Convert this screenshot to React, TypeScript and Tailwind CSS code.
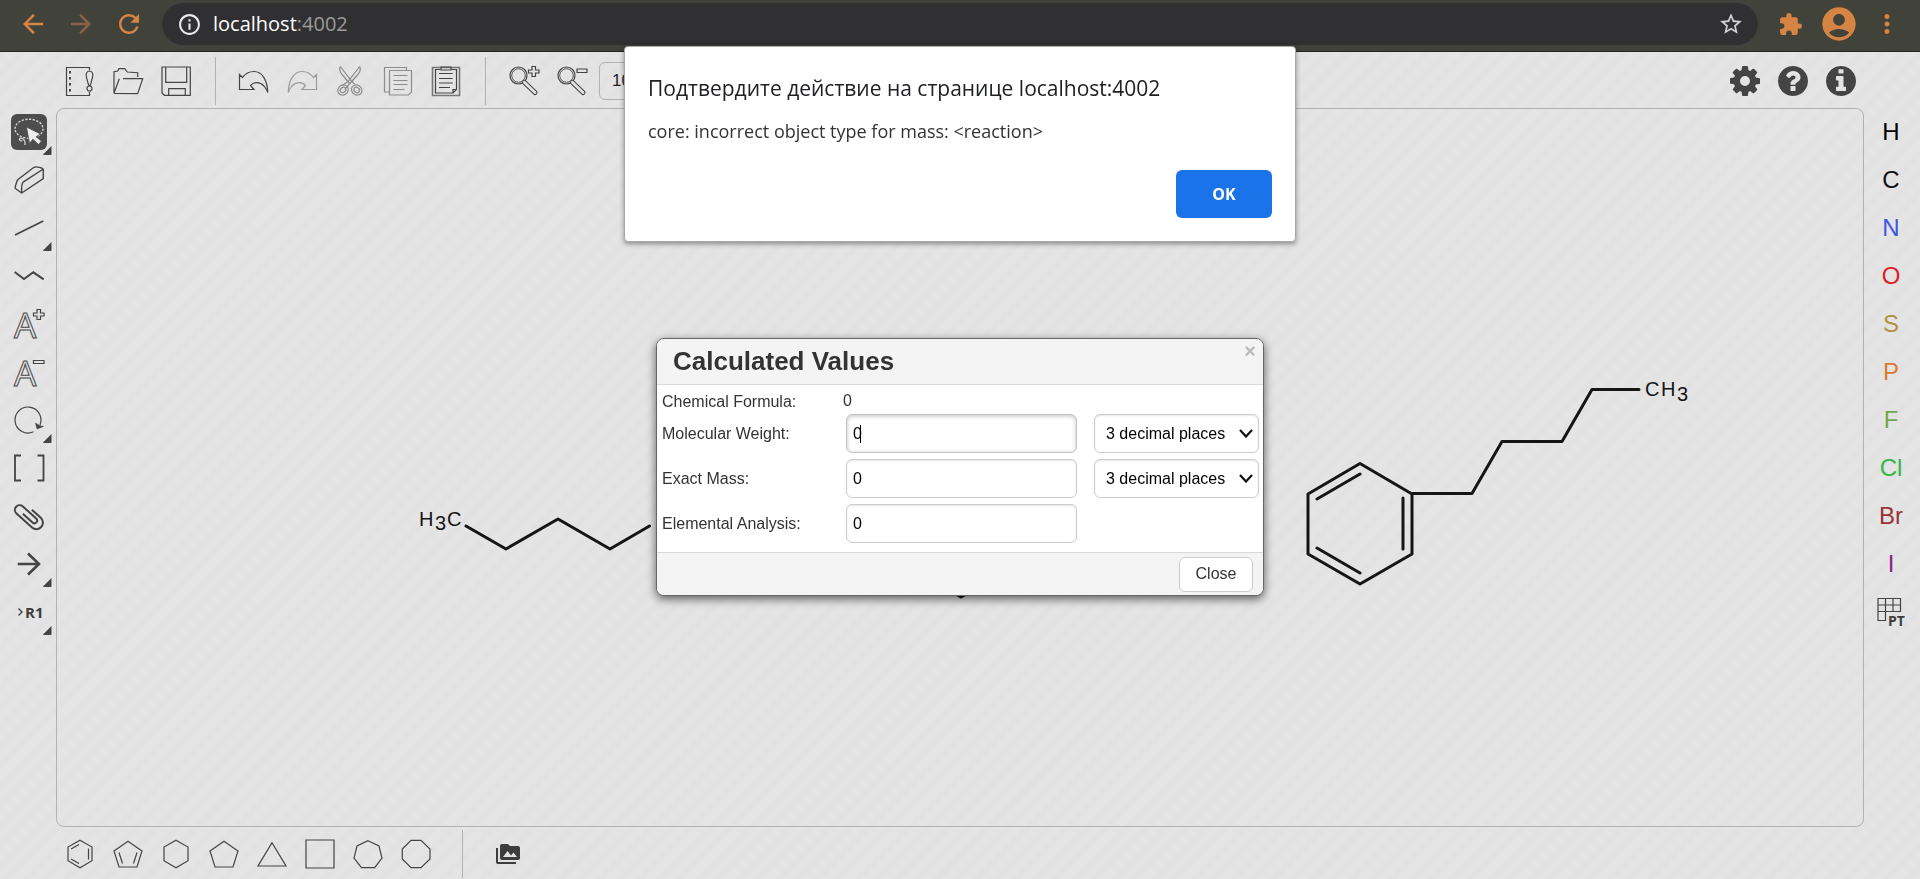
import type { ReactNode } from "react";
import {
  MdAccountCircle,
  MdArrowBack,
  MdArrowForward,
  MdExtension,
  MdInfoOutline,
  MdMoreVert,
  MdPermMedia,
  MdRefresh,
  MdStarBorder,
} from "react-icons/md";

const paper = "#e3e3e3";

function Glyph({ children, color = "#444", width = 1.2 }: { children: ReactNode; color?: string; width?: number }) {
  return (
    <svg viewBox="0 0 32 32" className="size-8 shrink-0 overflow-visible" fill="none" stroke={color} strokeWidth={width} aria-hidden="true">
      {children}
    </svg>
  );
}

function Tool({ label, children, more = false, active = false }: { label: string; children: ReactNode; more?: boolean; active?: boolean }) {
  return (
    <button type="button" aria-label={label} className="relative flex size-12 shrink-0 items-center justify-center">
      <span className={active ? "flex size-9 items-center justify-center rounded-md bg-[#4d4d4d]" : "flex size-9 items-center justify-center"}>
        {children}
      </span>
      {more && (
        <svg viewBox="0 0 9 9" className="absolute right-px bottom-px size-[9px]" fill="#444" aria-hidden="true">
          <path d="M0 8.5 8.5 0V8a1 1 0 0 1-1 1H.5Z" />
        </svg>
      )}
    </button>
  );
}

function Divider() {
  return <div className="mr-3.5 ml-[15px] h-12 w-px shrink-0 bg-[#b2b2b2]" />;
}

const disc =
  "m640 416q0 209-103 385.500t-279.500 279.500-385.500 103-385.500-103-279.500-279.500-103-385.500 103-385.500 279.500-279.500 385.500-103 385.500 103 279.500 279.500 103 385.500z";

const solidIcons = [
  {
    label: "Settings",
    d: "M1152 896q0-106-75-181t-181-75-181 75-75 181 75 181 181 75 181-75 75-181zm512-109v222q0 12-8 23t-20 13l-185 28q-19 54-39 91 35 50 107 138 10 12 10 25t-9 23q-27 37-99 108t-94 71q-12 0-26-9l-138-108q-44 23-91 38-16 136-29 186-7 28-36 28h-222q-14 0-24.500-8.500t-11.500-21.500l-28-184q-49-16-90-37l-141 107q-10 9-25 9-14 0-25-11-126-114-165-168-7-10-7-23 0-12 8-23 15-21 51-66.500t54-70.500q-27-50-41-99l-183-27q-13-2-21-12.500t-8-23.500v-222q0-12 8-23t19-13l186-28q14-46 39-92-40-57-107-138-10-12-10-24 0-10 9-23 26-36 98.500-107.500t94.500-71.500q13 0 26 10l138 107q44-23 91-38 16-136 29-186 7-28 36-28h222q14 0 24.500 8.500t11.500 21.500l28 184q49 16 90 37l142-107q9-9 24-9 13 0 25 10 129 119 165 170 7 8 7 22 0 12-8 23-15 21-51 66.500t-54 70.500q26 50 41 98l183 28q13 2 21 12.500t8 23.500z",
  },
  {
    label: "Help",
    d: "M1024 1376v-192q0-14-9-23t-23-9h-192q-14 0-23 9t-9 23v192q0 14 9 23t23 9h192q14 0 23-9t9-23zm256-672q0-88-55.500-163t-138.500-116-170-41q-243 0-371 213-15 24 8 42l132 100q7 6 19 6 16 0 25-12 53-68 86-92 34-24 86-24 48 0 85.500 26t37.500 59q0 38-20 61t-68 45q-63 28-115.500 86.500t-52.500 125.500v36q0 14 9 23t23 9h192q14 0 23-9t9-23q0-19 21.500-49.500t54.500-49.500q32-18 49-28.500t46-35 44.500-48 28-60.500 12.500-81zm384 192q0 209-103 385.500t-279.500 279.500-385.500 103-385.500-103-279.500-279.500-103-385.500 103-385.500 279.500-279.500 385.500-103 385.500 103 279.500 279.500 103 385.500z",
  },
  {
    label: "About",
    d: "M1152 1376v-160q0-14-9-23t-23-9h-96v-512q0-14-9-23t-23-9h-320q-14 0-23 9t-9 23v160q0 14 9 23t23 9h96v320h-96q-14 0-23 9t-9 23v160q0 14 9 23t23 9h448q14 0 23-9t9-23zm-128-896v-160q0-14-9-23t-23-9h-192q-14 0-23 9t-9 23v160q0 14 9 23t23 9h192q14 0 23-9t9-23z" + disc,
  },
];

const atoms = [
  { symbol: "H", color: "text-[#000000]" },
  { symbol: "C", color: "text-[#111111]" },
  { symbol: "N", color: "text-[#3d55e0]" },
  { symbol: "O", color: "text-[#dc2226]" },
  { symbol: "S", color: "text-[#b3923c]" },
  { symbol: "P", color: "text-[#db7a2e]" },
  { symbol: "F", color: "text-[#6fa94a]" },
  { symbol: "Cl", color: "text-[#35b646]" },
  { symbol: "Br", color: "text-[#993336]" },
  { symbol: "I", color: "text-[#8a1f8e]" },
];

const rings = [
  { label: "Cyclopentadiene", points: "16,3.3 30,13 25,29 7,29 2,13", extra: "M7 14.5 10.500 25.500M25 14.500 21.500 25.500" },
  { label: "Cyclohexane", points: "16,2.3 28,9 28,22.700 16,29.700 4,22.700 4,9", extra: "" },
  { label: "Cyclopentane", points: "16,3.3 30,13 25,29 7,29 2,13", extra: "" },
  { label: "Cyclopropane", points: "16,4.7 30,28 2,28", extra: "" },
  { label: "Cyclobutane", points: "2,2 30,2 30,30 2,30", extra: "" },
  { label: "Cycloheptane", points: "16,2.7 27,8 30,20 22.700,29.700 9.500,29.700 2,20 5,8", extra: "" },
  { label: "Cyclooctane", points: "11,2.3 21,2.3 30,11 30,21 21,29.700 11,29.700 2.300,21 2.300,11", extra: "" },
];

const cornerPlus = "M24 1.500h3.500v3.500h3.500v3h-3.500v3.500h-3.500v-3.500h-3.500v-3h3.500Z";

function Magnifier({ children }: { children: ReactNode }) {
  return (
    <Glyph>
      <circle cx="10.500" cy="10.500" r="8.500" />
      <circle cx="10.500" cy="10.500" r="6.800" strokeWidth="0.900" />
      <path d="M16.500 17.500 27 27.500" strokeWidth="5" strokeLinecap="round" />
      <path d="M16.300 17.300 27 27.500" stroke={paper} strokeWidth="2.800" strokeLinecap="round" />
      {children}
    </Glyph>
  );
}

function BrowserBar() {
  return (
    <header className="flex h-[52px] shrink-0 items-center border-b border-[#26261f] bg-[#41423a] pb-[3px] pl-[18px] text-[#d68444]">
      <button type="button" aria-label="Back" className="mr-[18px]"><MdArrowBack size={30} /></button>
      <button type="button" aria-label="Forward" className="mr-[18px] text-[#8a6245]"><MdArrowForward size={30} /></button>
      <button type="button" aria-label="Reload" className="mr-[18px]"><MdRefresh size={30} /></button>
      <div className="flex h-[42px] flex-1 items-center rounded-full bg-[#303032] pr-3.5 pl-[15px]">
        <MdInfoOutline size={25} className="text-[#e8e8e8]" />
        <div className="ml-[11px] flex-1 font-['Open_Sans','Noto_Sans',sans-serif] text-[20px] leading-6 text-white">
          localhost<span className="text-[#9b9b9b]">:4002</span>
        </div>
        <button type="button" aria-label="Bookmark" className="text-[#d0d0d0]"><MdStarBorder size={26} /></button>
      </div>
      <button type="button" aria-label="Extensions" className="ml-5"><MdExtension size={25} /></button>
      <button type="button" aria-label="Profile" className="ml-4"><MdAccountCircle size={40} /></button>
      <button type="button" aria-label="Menu" className="mr-[18px] ml-[13px]"><MdMoreVert size={30} /></button>
    </header>
  );
}

function TopTools() {
  const faded = "#9a9a9a";
  return (
    <div className="flex h-14 shrink-0 items-center pt-0.5 pr-[55px] pl-14">
      <Tool label="New">
        <Glyph>
          <path d="M25.500 5V2.500H2.500V30.500H25.500V27" />
          <path d="M6 6v2.500M6 12v2.500M6 18v2.500M6 24v2.500" strokeWidth="2" />
          <path d="M25.500 6C20.500 6.500 22 12 24.800 20.500H26.200C29 12 30.500 6.500 25.500 6Z" />
          <circle cx="25.500" cy="23.500" r="2.500" />
        </Glyph>
      </Tool>
      <Tool label="Open">
        <Glyph>
          <path d="M25.700 12V7.700L15.300 7 12.700 3.700H7L5.700 6 2 6.700V28.300L7.300 13.700M11 13.700H30.700L25.700 28.700 2 28.300" />
        </Glyph>
      </Tool>
      <Tool label="Save">
        <Glyph>
          <path d="M2 2H30.300V30.300H4.500L2 28Z" />
          <path d="M5.700 2V17.300H26.700V2M8.700 30V23.700H25.300V30" />
        </Glyph>
      </Tool>
      <Divider />
      <Tool label="Undo">
        <Glyph>
          <path d="M1.500 9.500V24.500H16L12.500 20.500C15.500 16.500 22 16.500 26 21C28 23.500 29 25 29.700 27.500C29.500 15 24 6.500 16 6.500C11 6.500 7 9 4.500 12.500Z" />
        </Glyph>
      </Tool>
      <Tool label="Redo">
        <Glyph color={faded}>
          <path d="M30.500 9.500V24.500H16L19.500 20.500C16.500 16.500 10 16.500 6 21C4 23.500 3 25 2.300 27.500C2.500 15 8 6.500 16 6.500C21 6.500 25 9 27.500 12.500Z" />
        </Glyph>
      </Tool>
      <Tool label="Cut">
        <Glyph color="#8c8c8c">
          <path d="M6.300 1.500C5 5 6.500 8 8.500 10L15.500 18.500M6.300 1.500 17.500 16 21 19.500M25.700 1.500C27 5 25.500 8 23.500 10L11 24M25.700 1.500 14.500 16 8.500 20.500" />
          <ellipse cx="9" cy="25" rx="5.500" ry="4.800" transform="rotate(-35 9 25)" />
          <ellipse cx="9" cy="25" rx="3" ry="2.500" transform="rotate(-35 9 25)" />
          <ellipse cx="22.700" cy="25" rx="5.500" ry="4.800" transform="rotate(35 22.700 25)" />
          <ellipse cx="22.700" cy="25" rx="3" ry="2.500" transform="rotate(35 22.700 25)" />
        </Glyph>
      </Tool>
      <Tool label="Copy">
        <Glyph color="#8c8c8c">
          <path d="M24.500 5V2.500H2.500V27H7M7.500 5.500H29.500V27L26.500 30H7.500ZM11.500 10.500H25.500M11.500 15.500H25.500M11.500 19.500H25.500M11.500 24.500H22.500" />
        </Glyph>
      </Tool>
      <Tool label="Paste">
        <Glyph>
          <path d="M2.500 2.500H29.500V30.500H2.500Z" stroke="#777" strokeWidth="1.600" />
          <path d="M10.500 4.500H5.500V28H23L26.500 24.500V4.500H21.500M23 28V24.500H26.500M9 8.500H22.700M9 13.500H22.700M9 18H22.700M9 22.500H20" />
          <path d="M11 2h10v3H11Z" />
        </Glyph>
      </Tool>
      <Divider />
      <Tool label="Zoom in">
        <Magnifier><path d={cornerPlus} /></Magnifier>
      </Tool>
      <Tool label="Zoom out">
        <Magnifier><path d="M21 4h10v3.500H21Z" /></Magnifier>
      </Tool>
      <input
        aria-label="Zoom level"
        defaultValue="100%"
        className="ml-[3px] h-[38px] w-24 rounded-md border border-[#b2b2b2] px-3 font-['Liberation_Sans',Arial,sans-serif] text-[17px] text-[#222]"
      />
      <div className="ml-auto flex">
        {solidIcons.map((icon) => (
          <Tool key={icon.label} label={icon.label}>
            <svg viewBox="128 128 1536 1536" className="size-[30px]" fill="#444" aria-hidden="true">
              <path d={icon.d} />
            </svg>
          </Tool>
        ))}
      </div>
    </div>
  );
}

function LeftTools() {
  return (
    <aside className="w-14 shrink-0 pl-[5px]">
      <Tool label="Lasso selection" more active>
        <Glyph color="#d8d8d8">
          <ellipse cx="16" cy="12.700" rx="14" ry="9.500" strokeDasharray="2.200 1.500" strokeWidth="1.400" />
          <path d="M9 22.500C5 21.500 6 26 9.500 24.500M9 22C12 24 12.500 26 12 29" />
          <path d="M13.500 11 16.500 27.500 19.800 23.200 25.500 28.500 28.500 25 23 20.800 27.500 18Z" fill="#eee" stroke="#4d4d4d" strokeWidth="0.800" />
        </Glyph>
      </Tool>
      <Tool label="Erase">
        <Glyph width={1.400}>
          <path d="M2 24.300C3 20 3.500 17 5 15.500L21 3.300C23 2 30.300 4 30.300 5.500V14.700L8.700 29 2 24.300M8.700 29C8.500 25 8 20 10.500 17.800L30.300 5" />
        </Glyph>
      </Tool>
      <Tool label="Single bond" more>
        <Glyph width={1.800}><path d="M2 23 30.300 9" /></Glyph>
      </Tool>
      <Tool label="Chain">
        <Glyph width={2}><path d="M1.700 12 11 19 20.300 12.300 30.700 19.300" /></Glyph>
      </Tool>
      <Tool label="Charge plus">
        <Glyph>
          <text x="1" y="29.500" fontSize="35" fontFamily="Noto Sans, sans-serif" strokeWidth="1">A</text>
          <path d={cornerPlus} />
        </Glyph>
      </Tool>
      <Tool label="Charge minus">
        <Glyph>
          <text x="1" y="29.500" fontSize="35" fontFamily="Noto Sans, sans-serif" strokeWidth="1">A</text>
          <path d="M20.500 4.500h10.500v3h-10.500Z" />
        </Glyph>
      </Tool>
      <Tool label="Rotate" more>
        <Glyph>
          <path d="M20.500 27.800A13 13 0 1 1 27 21" />
          <path d="M22.500 19 24 25 30.500 22.500 26.500 21.500Z" fill="#444" strokeWidth="0.500" />
        </Glyph>
      </Tool>
      <Tool label="S-group">
        <Glyph width={1.800}><path d="M8 3.500H2V28.500H8M24.500 3.500H30.500V28.500H24.500" /></Glyph>
      </Tool>
      <Tool label="Data">
        <Glyph width={2}>
          <path transform="rotate(42 16 16)" d="M14 9.500H26a6.500 6.500 0 0 1 0 13H5a4.750 4.750 0 0 1 0-9.500H23a2.750 2.750 0 0 1 0 5.500H10" />
        </Glyph>
      </Tool>
      <Tool label="Reaction arrow" more>
        <Glyph width={2.600}><path d="M4.700 16H26M15 5.500 26 16 15 26.500" /></Glyph>
      </Tool>
      <Tool label="R-group" more>
        <Glyph width={1.400}>
          <path d="M5.500 12.500 9 16 5.500 19.500" />
          <text x="12" y="22" fontSize="15" fontWeight="700" fontFamily="Open Sans, sans-serif" fill="#3d3d3d" stroke="none">R1</text>
        </Glyph>
      </Tool>
    </aside>
  );
}

function Sketch() {
  return (
    <main className="min-w-0 flex-1 rounded-lg border border-[#b2b2b2]">
      <svg
        viewBox="58 109 1806 717"
        className="size-full"
        fill="none"
        stroke="#151515"
        strokeWidth="3"
        strokeLinejoin="round"
        strokeLinecap="round"
        role="img"
        aria-label="Reaction scheme"
      >
        <path d="M467 526 507 549 559 519 611 549 650.500 526M910 567 962 597 1014 567" />
        <path d="M1361 463.500 1413 494V554L1361 584 1309 554V494ZM1318 499 1361 474M1404 498V549M1318 548 1361 573" />
        <path d="M1413 493.500H1473L1503 441.500H1563L1593 389.500H1640" />
        <g fill="#151515" stroke="none" fontSize="20" fontFamily="Liberation Sans, Arial, sans-serif">
          <text x="420" y="526">H</text>
          <text x="436" y="530">3</text>
          <text x="448" y="526">C</text>
          <text x="1646" y="396">C</text>
          <text x="1662" y="396">H</text>
          <text x="1678" y="401">3</text>
        </g>
      </svg>
    </main>
  );
}

function AtomTools() {
  return (
    <aside className="flex w-14 shrink-0 flex-col items-center pr-0.5 font-['Liberation_Sans',Arial,sans-serif] text-2xl">
      {atoms.map((atom) => (
        <button key={atom.symbol} type="button" className={`h-12 w-12 shrink-0 ${atom.color}`}>
          {atom.symbol}
        </button>
      ))}
      <Tool label="Periodic table">
        <Glyph>
          <path d="M3 2.500H25.500V15.500H3ZM3 9H25.500M10.500 2.500V24.500H3V15.500M18 2.500V15.500" />
          <text x="13" y="29.500" fontSize="14" fontWeight="700" fontFamily="Open Sans, sans-serif" fill="#3d3d3d" stroke="none">PT</text>
        </Glyph>
      </Tool>
    </aside>
  );
}

function RingTools() {
  return (
    <div className="flex h-[52px] shrink-0 items-center pt-0.5 pl-14">
      <Tool label="Benzene">
        <Glyph>
          <path d="M16 2.300 28 9V22.700L16 29.700 4 22.700V9ZM7 11 15 6.500M24.500 10.500V21.500M7 21 15 25.500" />
        </Glyph>
      </Tool>
      {rings.map((ring) => (
        <Tool key={ring.label} label={ring.label}>
          <Glyph>
            <polygon points={ring.points} />
            {ring.extra && <path d={ring.extra} />}
          </Glyph>
        </Tool>
      ))}
      <div className="flex px-[7px]"><Divider /></div>
      <Tool label="Template library">
        <MdPermMedia size={24} className="text-[#3d3d3d]" />
      </Tool>
    </div>
  );
}

function PlacesSelect({ label }: { label: string }) {
  return (
    <div className="relative w-[165px]">
      <select
        aria-label={label}
        className="h-[39px] w-full appearance-none rounded-md border border-[#ccc] bg-white pl-[11px] text-[16px] text-black shadow-[inset_0_1px_2px_#0000001a]"
      >
        <option>3 decimal places</option>
      </select>
      <svg viewBox="0 0 14 9" className="pointer-events-none absolute top-[15px] right-[6px] h-[9px] w-[14px]" fill="none" stroke="#111" strokeWidth="2.200" aria-hidden="true">
        <path d="M1 1 7 7.500 13 1" />
      </svg>
    </div>
  );
}

function ValueRow({ id, label, caret = false, places = false }: { id: string; label: string; caret?: boolean; places?: boolean }) {
  return (
    <div className="flex items-center">
      <label htmlFor={id} className="w-[184px] shrink-0">{label}</label>
      <div className="relative mr-[17px] w-[231px]">
        <input
          id={id}
          defaultValue="0"
          className={
            caret
              ? "h-[39px] w-full rounded-md border border-[#c4c4c4] bg-white px-1.5 text-[16px] text-black shadow-[inset_0_1px_4px_#00000040]"
              : "h-[39px] w-full rounded-md border border-[#ccc] bg-white px-1.5 text-[16px] text-black shadow-[inset_0_1px_2px_#0000001a]"
          }
        />
        {caret && <span className="absolute top-[11px] left-[14px] h-[18px] w-px bg-black" />}
      </div>
      {places && <PlacesSelect label={`${label} precision`} />}
    </div>
  );
}

function CalculatedValues() {
  return (
    <div className="pointer-events-none fixed inset-0 flex items-start justify-center pt-[338px]">
      <section
        role="dialog"
        aria-label="Calculated Values"
        className="pointer-events-auto w-[608px] overflow-hidden rounded-lg border border-[#666] bg-white font-['Liberation_Sans',Arial,sans-serif] text-[16px] leading-5 text-[#333] shadow-[0_3px_10px_#00000099]"
      >
        <header className="flex h-[46px] items-start justify-between border-b border-[#d9d9d9] bg-[#f4f4f4] pr-[7px] pl-4">
          <h2 className="pt-1.5 text-[26px] leading-8 font-bold">Calculated Values</h2>
          <button type="button" aria-label="Close dialog" className="text-[20px] leading-6 font-bold text-[#bbb]">×</button>
        </header>
        <div className="pt-1.5 pb-[9px] pl-[5px]">
          <div className="flex h-[23px]">
            <span className="w-[181px] pt-px">Chemical Formula:</span>
            <span>0</span>
          </div>
          <div className="flex flex-col gap-1.5">
            <ValueRow id="weight" label="Molecular Weight:" caret places />
            <ValueRow id="mass" label="Exact Mass:" places />
            <ValueRow id="analysis" label="Elemental Analysis:" />
          </div>
        </div>
        <footer className="flex h-[43px] items-center justify-end border-t border-[#d9d9d9] bg-[#f4f4f4] pr-2.5">
          <button type="button" className="h-[35px] w-[74px] rounded-md border border-[#ccc] bg-white">Close</button>
        </footer>
      </section>
    </div>
  );
}

function PageAlert() {
  return (
    <div className="pointer-events-none fixed inset-0 flex items-start justify-center pt-[46px]">
      <section
        role="alertdialog"
        aria-label="Page alert"
        className="pointer-events-auto flex w-[672px] flex-col rounded border border-[#a8a8a8] bg-white px-[23px] pt-[27px] pb-[23px] font-['Open_Sans','Noto_Sans',sans-serif] text-[#202124] shadow-[0_2px_5px_#00000066]"
      >
        <h2 className="text-[21px] leading-7">Подтвердите действие на странице localhost:4002</h2>
        <p className="mt-[17px] text-[18px] leading-6 text-[#333]">core: incorrect object type for mass: &lt;reaction&gt;</p>
        <button type="button" className="mt-[27px] h-12 w-24 self-end rounded-md bg-[#1a73e8] text-[16px] font-bold text-white">OK</button>
      </section>
    </div>
  );
}

export default function App() {
  return (
    <div className="flex h-screen flex-col overflow-hidden bg-[#e3e3e3] bg-[repeating-linear-gradient(135deg,#e4e4e4_0_6px,#e2e2e2_8px_12px,#e4e4e4_14px)]">
      <BrowserBar />
      <TopTools />
      <div className="flex min-h-0 flex-1">
        <LeftTools />
        <Sketch />
        <AtomTools />
      </div>
      <RingTools />
      <CalculatedValues />
      <PageAlert />
    </div>
  );
}
